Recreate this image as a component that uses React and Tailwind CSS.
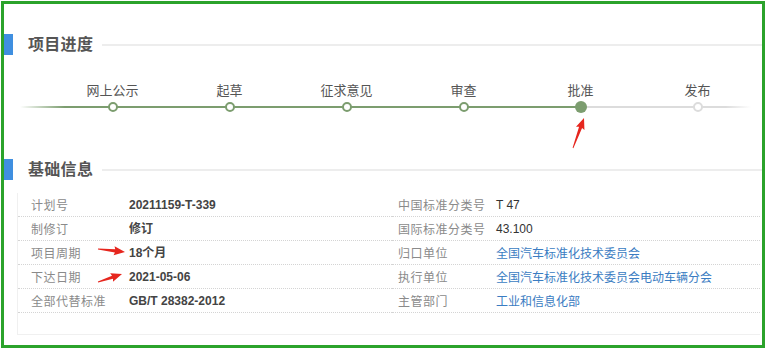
import React from "react";

function arrowPoints(tx, ty, px, py) {
  const dx = px - tx, dy = py - ty;
  const L = Math.hypot(dx, dy);
  const ux = dx / L, uy = dy / L;
  const nx = -uy, ny = ux;
  const hb = L - 10;
  const pt = (d, w) => [tx + ux * d + nx * w, ty + uy * d + ny * w];
  const pts = [
    pt(0, 0.4),
    pt(hb, 1.6),
    pt(hb - 1, 4.5),
    pt(L, 0),
    pt(hb - 1, -4.5),
    pt(hb, -1.6),
    pt(0, -0.4),
  ];
  return pts.map((p) => p.map((v) => v.toFixed(2)).join(",")).join(" ");
}

const steps = [
  { label: "网上公示", state: "done" },
  { label: "起草", state: "done" },
  { label: "征求意见", state: "done" },
  { label: "审查", state: "done" },
  { label: "批准", state: "active" },
  { label: "发布", state: "todo" },
];

const leftRows = [
  ["计划号", "20211159-T-339"],
  ["制修订", "修订"],
  ["项目周期", "18个月"],
  ["下达日期", "2021-05-06"],
  ["全部代替标准", "GB/T 28382-2012"],
];

const rightRows = [
  ["中国标准分类号", "T 47", false],
  ["国际标准分类号", "43.100", false],
  ["归口单位", "全国汽车标准化技术委员会", true],
  ["执行单位", "全国汽车标准化技术委员会电动车辆分会", true],
  ["主管部门", "工业和信息化部", true],
];

function Heading({ children }) {
  return (
    <div className="flex items-center h-[21px]">
      <div className="w-[9px] h-[21px] bg-[#3f8fe0]" />
      <div className="ml-[15px] text-[16px] leading-[21px] font-bold text-[#555] tracking-[0.3px]">
        {children}
      </div>
      <div className="ml-[9px] flex-1 h-[2px] bg-[#ededed]" />
    </div>
  );
}

export default function App() {
  return (
    <div className="w-[768px] h-[350px] bg-white overflow-hidden relative font-['Liberation_Sans','Noto_Sans_CJK_SC',sans-serif]">
      <div className="ml-[1px] mt-[1px] w-[764px] h-[347px] border-[3px] border-[#2ba32b]">
        <div className="mt-[30px]">
          <Heading>项目进度</Heading>
        </div>

        {/* timeline */}
        <div className="relative mt-[26px]">
          <div className="absolute top-[25px] left-[16px] w-[561px] h-[2px] bg-gradient-to-r from-[#ffffff] via-[#7c9d6f] via-[8%] to-[#7c9d6f]" />
          <div className="absolute top-[25px] left-[577px] w-[170px] h-[2px] bg-gradient-to-r from-[#dcdcdc] via-[#dcdcdc] via-[85%] to-[#ffffff]" />
          <div className="relative grid grid-cols-[repeat(6,117px)] pl-[50px]">
            {steps.map((s) => (
              <div key={s.label} className="flex flex-col items-center">
                <div className="text-[13px] leading-[17px] text-[#555] font-['Noto_Sans_CJK_SC',sans-serif]">
                  {s.label}
                </div>
                <div
                  className={
                    s.state === "done"
                      ? "mt-[4px] w-[10px] h-[10px] rounded-full border-2 border-[#7c9d6f] bg-white"
                      : s.state === "active"
                      ? "mt-[3px] w-[12px] h-[12px] rounded-full bg-[#7c9d6f]"
                      : "mt-[4px] w-[10px] h-[10px] rounded-full border-2 border-[#dcdcdc] bg-white"
                  }
                />
              </div>
            ))}
          </div>
        </div>

        <div className="mt-[46px]">
          <Heading>基础信息</Heading>
        </div>

        {/* table */}
        <div className="mt-[13px] ml-[13px] mr-[2px] border-l border-b border-[#f0f0f0] pb-[21px] flex">
          <div className="w-[374px]">
            {leftRows.map(([k, v]) => (
              <div key={k} className="h-[24px] flex items-center border-b border-dotted border-[#d4d4d4]">
                <div className="w-[111px] pl-[13px] text-[12px] tracking-[0.5px] text-[#8a8a8a] font-['Noto_Sans_CJK_SC',sans-serif]">
                  {k}
                </div>
                <div className="text-[12px] font-bold text-[#444]">{v}</div>
              </div>
            ))}
          </div>
          <div className="flex-1">
            {rightRows.map(([k, v, link]) => (
              <div key={k} className="h-[24px] flex items-center border-b border-dotted border-[#d4d4d4]">
                <div className="w-[104px] pl-[6px] text-[12px] tracking-[0.5px] text-[#8a8a8a] font-['Noto_Sans_CJK_SC',sans-serif] whitespace-nowrap">
                  {k}
                </div>
                <div className={link ? "text-[12px] text-[#3a7cc2] font-['Noto_Sans_CJK_SC',sans-serif]" : "text-[12px] text-[#333]"}>
                  {v}
                </div>
              </div>
            ))}
          </div>
        </div>
      </div>

      {/* red annotation arrows */}
      <svg className="absolute inset-0 pointer-events-none" width="768" height="350">
        <polygon points={arrowPoints(573, 148, 584, 118)} fill="#e6261e" />
        <polygon points={arrowPoints(98, 249, 125, 252)} fill="#e6261e" />
        <polygon points={arrowPoints(98, 282, 122, 274)} fill="#e6261e" />
      </svg>
    </div>
  );
}
